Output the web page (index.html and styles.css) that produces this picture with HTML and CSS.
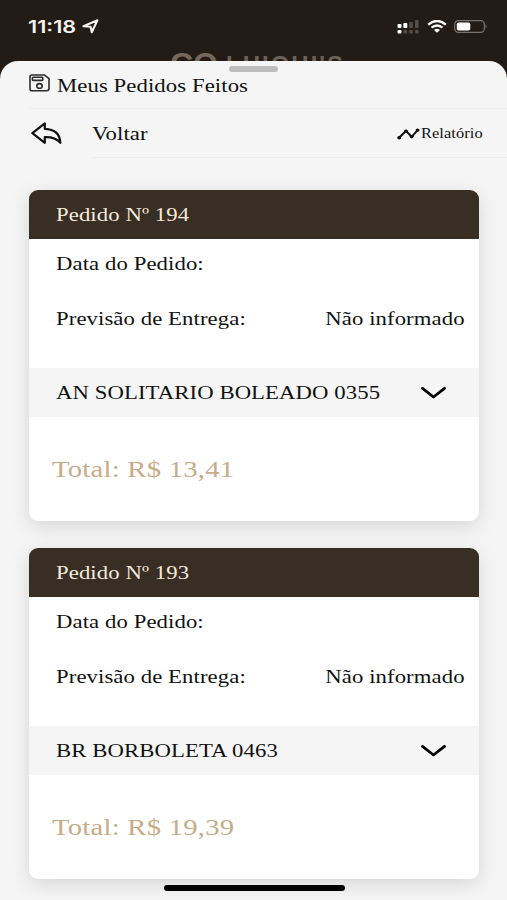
FILE: index.html
```html
<!DOCTYPE html>
<html lang="pt-BR">
<head>
    <meta charset="UTF-8">
    <meta name="viewport" content="width=device-width, initial-scale=1.0">
    <title>Meus Pedidos Feitos</title>
    <link rel="stylesheet" href="styles.css">
</head>
<body>
    <div class="topo">
        <div class="status-bar">
            <div class="hora">
                <span class="relogio">11:18</span>
                <svg width="17" height="15" viewBox="0 0 17 15"><path d="M1.5 7.2 L15.4 1.3 L9.8 13.2 L8.6 7.8 Z" fill="none" stroke="#f6f2ee" stroke-width="2.1" stroke-linejoin="round"/></svg>
            </div>
            <div class="status-icones">
                <svg width="23" height="14" viewBox="0 0 23 14">
                    <g fill="#fff"><rect x="1.5" y="4" width="4" height="4" rx="1"/><rect x="7.3" y="3" width="4" height="5" rx="1"/><rect x="1.5" y="10" width="4" height="3.5" rx="1"/></g>
                    <g fill="#554e48"><rect x="13.2" y="2" width="3.6" height="6" rx="1"/><rect x="19" y="0" width="3.6" height="8" rx="1"/><rect x="7.5" y="10" width="3.6" height="3.5" rx="1"/><rect x="13.2" y="10" width="3.6" height="3.5" rx="1"/><rect x="19" y="10" width="3.6" height="3.5" rx="1"/></g>
                </svg>
                <svg class="wifi" width="20" height="13" viewBox="0 0 20 13">
                    <path d="M1.2 4.6 Q10 -2.6 18.8 4.6" fill="none" stroke="#fff" stroke-width="2.4"/>
                    <path d="M4.5 7.7 Q10 3.2 15.5 7.7" fill="none" stroke="#fff" stroke-width="2.3"/>
                    <path d="M7 10 Q10 7.4 13 10 L10 12.8 Z" fill="#fff"/>
                </svg>
                <svg class="bateria" width="34" height="13" viewBox="0 0 34 13">
                    <rect x=".7" y=".7" width="29.6" height="11.6" rx="3.6" fill="none" stroke="#77716c" stroke-width="1.2"/>
                    <rect x="2.8" y="2.4" width="13.5" height="8.2" rx="1.8" fill="#fff"/>
                    <path d="M31.5 4.3 Q33.6 6.5 31.5 8.7 Z" fill="#77716c"/>
                </svg>
            </div>
        </div>
        <div class="logo"><span class="logo-grande">CO</span><span class="logo-resto">LHIOHI'S</span></div>
    </div>
    <div class="folha">
        <div class="puxador"></div>
        <div class="titulo">
            <svg class="disquete" width="21" height="18" viewBox="0 0 21 18" fill="none" stroke="#2b2b2b" stroke-width="1.6">
                <path d="M2.8 1 H15.5 L20 4.6 V14.6 Q20 16.8 17.6 16.8 H3.2 Q1 16.8 1 14.8 V2.8 Q1 1 2.8 1 Z"/>
                <rect x="3.4" y="3.2" width="10.4" height="3.2" rx=".8"/>
                <ellipse cx="10.5" cy="11.9" rx="2.7" ry="2.3"/>
            </svg>
            <span class="largo">Meus Pedidos Feitos</span>
        </div>
        <div class="acoes">
            <svg class="seta" width="31" height="23" viewBox="0 0 31 23"><path d="M1.4 11.2 L13.8 1.4 V6.8 Q28.8 7.4 29.4 20.8 Q24 14.8 13.8 15.2 V20.8 Z" fill="none" stroke="#111" stroke-width="2.2" stroke-linejoin="round"/></svg>
            <div class="acoes-linha">
                <span class="largo">Voltar</span>
                <div class="relatorio">
                    <svg width="23" height="12" viewBox="0 0 23 12"><path d="M2 9.8 L9 3 L14.7 8.8 L20.8 1.9" fill="none" stroke="#111" stroke-width="2"/><g fill="#111"><ellipse cx="2.2" cy="9.7" rx="2" ry="1.7"/><ellipse cx="9" cy="3.1" rx="2" ry="1.7"/><ellipse cx="14.7" cy="8.6" rx="2" ry="1.7"/><ellipse cx="20.6" cy="2.1" rx="2" ry="1.7"/></g></svg>
                    <span class="largo">Relatório</span>
                </div>
            </div>
        </div>
        <div class="pedidos">
            <div class="card">
                <div class="card-header"><span class="largo">Pedido Nº 194</span></div>
                <div class="linha"><span class="largo">Data do Pedido:</span></div>
                <div class="linha entrega"><span class="largo">Previsão de Entrega:</span><span class="largo direita">Não informado</span></div>
                <div class="produto">
                    <span class="largo">AN SOLITARIO BOLEADO 0355</span>
                    <svg width="26" height="14" viewBox="0 0 26 14"><path d="M2.5 2.3 L13.5 11 L24.5 2.3" fill="none" stroke="#000" stroke-width="2.8" stroke-linecap="round" stroke-linejoin="round"/></svg>
                </div>
                <div class="total"><span class="largo">Total: R$ 13,41</span></div>
            </div>
            <div class="card">
                <div class="card-header"><span class="largo">Pedido Nº 193</span></div>
                <div class="linha"><span class="largo">Data do Pedido:</span></div>
                <div class="linha entrega"><span class="largo">Previsão de Entrega:</span><span class="largo direita">Não informado</span></div>
                <div class="produto">
                    <span class="largo">BR BORBOLETA 0463</span>
                    <svg width="26" height="14" viewBox="0 0 26 14"><path d="M2.5 2.3 L13.5 11 L24.5 2.3" fill="none" stroke="#000" stroke-width="2.8" stroke-linecap="round" stroke-linejoin="round"/></svg>
                </div>
                <div class="total"><span class="largo">Total: R$ 19,39</span></div>
            </div>
        </div>
    </div>
    <div class="home-bar"></div>
</body>
</html>
```
FILE: styles.css
```css
* {
    box-sizing: border-box;
}
body {
    margin: 0;
    height: 900px;
    overflow: hidden;
    background-color: #231b16;
    font-family: "Liberation Serif", "Times New Roman", serif;
    font-size: 19px;
    color: #111;
}
svg {
    display: block;
    flex: none;
}
/* texto esticado na horizontal */
.largo {
    display: inline-block;
    white-space: nowrap;
    letter-spacing: 0.08px;
    transform: scaleX(1.195);
    transform-origin: left center;
}
.direita {
    transform-origin: right center;
}
.topo {
    height: 61px;
    overflow: hidden;
}
.status-bar {
    display: flex;
    justify-content: space-between;
    height: 51px;
    padding: 0 19px 0 28px;
}
.hora, .status-icones {
    display: flex;
    align-items: center;
    height: 53px;
}
.relogio {
    width: 54px;
    font-family: Inter, sans-serif;
    font-size: 17px;
    font-weight: 600;
    color: #f6f2ee;
    white-space: nowrap;
    transform: scaleX(1.27);
    transform-origin: left center;
}
.wifi {
    margin: 0 7px 0 8px;
}
.logo {
    display: flex;
    align-items: flex-start;
    height: 40px;
    padding-left: 170px;
    font-family: "Liberation Sans", Arial, sans-serif;
    font-weight: bold;
    line-height: 1;
    color: #75685a;
}
.logo-grande {
    width: 56px;
    font-size: 32px;
    margin-top: -3px;
}
.logo-resto {
    font-size: 24px;
    letter-spacing: 2px;
    margin-top: 2px;
    color: #6b625a;
}
.folha {
    height: 839px;
    background-color: #f5f5f5;
    border-radius: 18px 18px 0 0;
    overflow: hidden;
}
.puxador {
    width: 49px;
    height: 6px;
    margin: 5px auto 0;
    border-radius: 3px;
    background-color: #bdbdbd;
}
.titulo {
    display: flex;
    align-items: center;
    height: 37px;
    padding-bottom: 9px;
    margin-left: 29px;
    gap: 7px;
    border-bottom: 1px solid #ececec;
}
.disquete {
    margin-bottom: 5px;
}
.acoes {
    display: flex;
    align-items: center;
    height: 49px;
    padding-left: 31px;
}
.acoes-linha {
    display: flex;
    flex: 1;
    align-items: center;
    justify-content: space-between;
    height: 49px;
    margin-left: 30px;
    padding: 2px 25px 0 0;
    border-bottom: 1px solid #ececec;
}
.relatorio {
    display: flex;
    align-items: center;
    width: 85px;
    gap: 1px;
    font-size: 13.7px;
}
.pedidos {
    display: flex;
    flex-direction: column;
    gap: 27px;
    padding: 32px 28px 0 29px;
}
.card {
    height: 331px;
    background-color: #fff;
    border-radius: 9px;
    box-shadow: 0 5px 20px rgba(0, 0, 0, 0.13);
}
.card-header {
    display: flex;
    align-items: center;
    height: 49px;
    padding-left: 27px;
    background-color: #392e23;
    border-radius: 9px 9px 0 0;
    color: #f3e9df;
}
.linha {
    display: flex;
    align-items: center;
    justify-content: space-between;
    height: 49px;
    padding: 0 14px 0 27px;
}
.entrega {
    height: 61px;
    margin-bottom: 19px;
}
.produto {
    display: flex;
    align-items: center;
    justify-content: space-between;
    height: 49px;
    padding: 0 33px 0 27px;
    background-color: #f5f5f5;
}
.total {
    display: flex;
    align-items: center;
    height: 104px;
    padding-left: 23px;
    font-size: 24px;
    color: #c8ab87;
}
.total .largo {
    letter-spacing: 0.2px;
}
.home-bar {
    position: absolute;
    left: 164px;
    bottom: 9px;
    width: 181px;
    height: 6px;
    border-radius: 3px;
    background-color: #000;
}
```
